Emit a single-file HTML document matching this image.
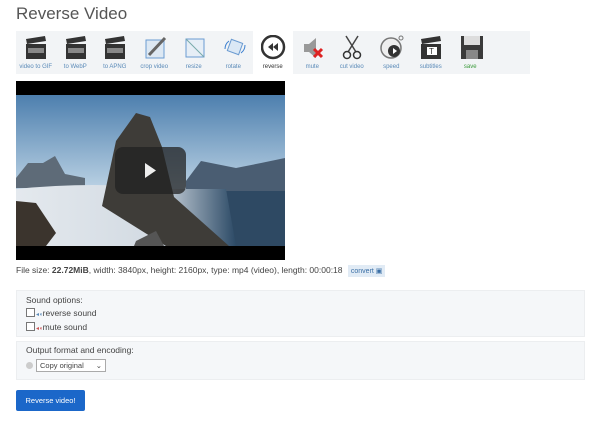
<!DOCTYPE html>
<html><head><style>
body{margin:0;width:600px;height:422px;background:#fff;font-family:"Liberation Sans",sans-serif;position:relative;overflow:hidden}
.t{position:absolute;left:16px;top:4px;font-size:17px;color:#555}
.tb{position:absolute;left:16px;top:31px;height:43px;width:514px;background:#f2f4f6;display:flex}
.it{width:39.5px;height:43px;position:relative;text-align:center}
.it.on{background:#fff}
.it span{position:absolute;left:0;right:0;top:33px;font-size:6px;color:#5a8ab8;white-space:nowrap}
.it svg{position:absolute;left:8px;top:4px}
.fs{position:absolute;left:16px;top:265px;font-size:8.5px;color:#444}
.cv{display:inline-block;background:#e1ebf5;color:#3a6ea5;font-size:7px;padding:2px 3px;margin-left:3px}
.box{position:absolute;left:16px;width:569px;background:#f5f7f9;border:1px solid #eceef0;font-size:8.5px;color:#444;box-sizing:border-box;padding:3px 9px}
.cb{display:inline-block;width:7px;height:7px;border:1px solid #777;vertical-align:-1px;margin-right:1px;background:#fff}
.btn{position:absolute;left:16px;top:390px;width:69px;height:21px;background:#1b67c9;color:#fff;font-size:7.5px;line-height:21px;text-align:center;border-radius:2px}
</style></head><body>
<div class="t">Reverse Video</div>
<div class="tb">
<div class="it"><svg width="24" height="26"><rect x="2" y="9" width="20" height="15" fill="#333"/><path d="M2 4l19-3 1 5-19 3z" fill="#333"/><rect x="4" y="13" width="16" height="5" fill="#888"/></svg><span>video to GIF</span></div>
<div class="it"><svg width="24" height="26"><rect x="2" y="9" width="20" height="15" fill="#333"/><path d="M2 4l19-3 1 5-19 3z" fill="#333"/><rect x="4" y="13" width="16" height="5" fill="#888"/></svg><span>to WebP</span></div>
<div class="it"><svg width="24" height="26"><rect x="2" y="9" width="20" height="15" fill="#333"/><path d="M2 4l19-3 1 5-19 3z" fill="#333"/><rect x="4" y="13" width="16" height="5" fill="#888"/></svg><span>to APNG</span></div>
<div class="it"><svg width="26" height="26"><rect x="3" y="5" width="18" height="18" fill="#dde8f3" stroke="#6b9bd1"/><path d="M6 20L22 3" stroke="#666" stroke-width="3"/></svg><span>crop video</span></div>
<div class="it"><svg width="26" height="26"><rect x="4" y="4" width="18" height="18" fill="#e6eef6" stroke="#6b9bd1"/><path d="M4 4L22 22" stroke="#7aa"/></svg><span>resize</span></div>
<div class="it"><svg width="26" height="26"><rect x="7" y="6" width="12" height="12" fill="#dbe8f5" stroke="#6b9bd1" transform="rotate(20 13 12)"/><path d="M3 14a10 10 0 0 1 4-8M23 10a10 10 0 0 1-4 8" stroke="#3a7fd0" fill="none"/></svg><span>rotate</span></div>
<div class="it on"><svg width="26" height="26"><circle cx="12" cy="12" r="11" fill="#fff" stroke="#333" stroke-width="2.5"/><path d="M12 8l-5 4 5 4zM17 8l-5 4 5 4z" fill="#333"/></svg><span style="color:#333">reverse</span></div>
<div class="it"><svg width="26" height="26"><path d="M3 9h5l7-6v20l-7-6H3z" fill="#999"/><path d="M13 14l8 8M21 14l-8 8" stroke="#d22" stroke-width="3"/></svg><span>mute</span></div>
<div class="it"><svg width="26" height="26"><path d="M6 1l10 16M18 1L8 17" stroke="#444" stroke-width="1.5"/><circle cx="7" cy="20" r="3.5" fill="none" stroke="#333" stroke-width="1.5"/><circle cx="17" cy="20" r="3.5" fill="none" stroke="#333" stroke-width="1.5"/></svg><span>cut video</span></div>
<div class="it"><svg width="26" height="26"><circle cx="11" cy="13" r="10" fill="#eee" stroke="#777" stroke-width="1.5"/><circle cx="14" cy="16" r="6" fill="#333"/><path d="M13 13v6l4-3z" fill="#fff"/><circle cx="21" cy="3" r="2" fill="none" stroke="#777"/></svg><span>speed</span></div>
<div class="it"><svg width="26" height="26"><rect x="2" y="9" width="20" height="15" fill="#333"/><path d="M2 4l19-3 1 5-19 3z" fill="#333"/><rect x="8" y="12" width="10" height="8" fill="#fff"/><text x="10" y="19" font-size="8" fill="#333" font-family="Liberation Sans">T</text></svg><span>subtitles</span></div>
<div class="it"><svg width="26" height="26"><rect x="2" y="1" width="22" height="23" fill="#3a3a3a"/><rect x="5" y="1" width="16" height="9" fill="#ddd"/><rect x="7" y="15" width="12" height="9" fill="#888"/></svg><span style="color:#3a9a3a">save</span></div>
</div>
<svg style="position:absolute;left:16px;top:81px" width="269" height="179">
<defs><linearGradient id="s" x1="0" y1="0" x2="0" y2="1"><stop offset="0" stop-color="#4d7fae"/><stop offset="0.6" stop-color="#b7cfe2"/></linearGradient>
<linearGradient id="w" x1="0" y1="0" x2="1" y2="0"><stop offset="0" stop-color="#e4e9ee"/><stop offset="0.65" stop-color="#d2dae2"/><stop offset="1" stop-color="#2c4a66"/></linearGradient></defs>
<rect width="269" height="179" fill="#000"/>
<rect y="14" width="269" height="151" fill="url(#s)"/>
<path d="M0 97l12-15 15 0 12-7 10 18 20 4v10H0z" fill="#5e6b78"/>
<path d="M170 100l15-20 15 3 20 4 25-5 24-5v40H170z" fill="#4a5d72"/>
<rect x="170" y="110" width="99" height="55" fill="#2e4963"/>
<path d="M0 108q80-8 150 0l60 0 10 57H0z" fill="url(#w)"/>
<path d="M86 125l14-65 20-28 14 4 12 30 12 50 55 49H150z" fill="#3e3c38"/>
<path d="M0 120l20 2 20 30-10 13H0z" fill="#3b342d"/>
<path d="M120 160l20-10 8 15h-30z" fill="#555"/>
<rect x="99" y="66" width="71" height="47" rx="8" fill="#222" fill-opacity="0.75"/>
<path d="M129 82v15l11-7.5z" fill="#eee"/>
</svg>
<div class="fs">File size: <b>22.72MiB</b>, width: 3840px, height: 2160px, type: mp4 (video), length: 00:00:18 <span class="cv">convert ▣</span></div>
<div class="box" style="top:290px;height:47px;line-height:12.5px">Sound options:<br><span class="cb"></span><span style="color:#5a8ab8;font-size:6px">◂◖</span>reverse sound<br><span class="cb"></span><span style="color:#c55;font-size:6px">◂◖</span>mute sound</div>
<div class="box" style="top:341px;height:39px">Output format and encoding:<br><span style="display:inline-block;width:7px;height:7px;border-radius:50%;background:#ccc;margin:5px 3px 0 0;vertical-align:-1px"></span><span style="display:inline-block;margin-top:4px;border:1px solid #aaa;background:#fff;font-size:7.5px;padding:1px 3px;width:62px">Copy original <span style="float:right">⌄</span></span></div>
<div class="btn">Reverse video!</div>
</body></html>
